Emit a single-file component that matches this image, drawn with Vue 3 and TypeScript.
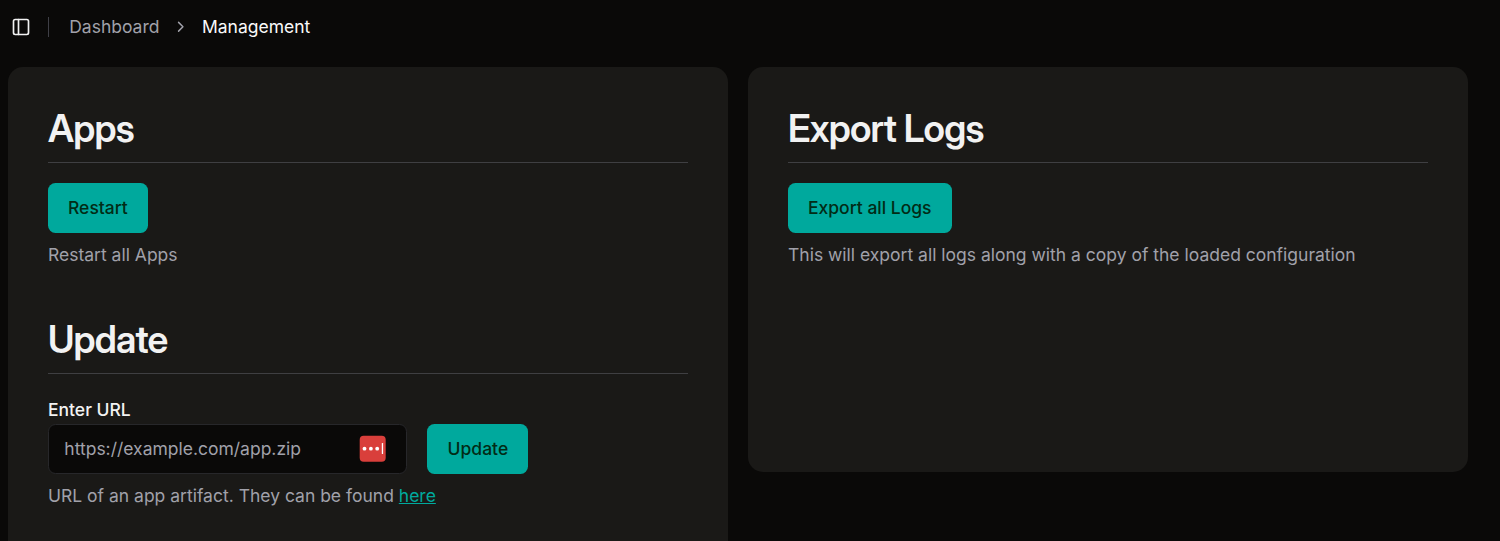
<script setup lang="ts">
import { ref } from 'vue'

const url = ref<string>('')
</script>

<template>
  <div class="page">
    <header class="topbar">
      <button class="toggle" type="button" aria-label="Toggle sidebar">
        <svg width="20" height="20" viewBox="0 0 24 24" fill="none" stroke="currentColor" stroke-width="2" stroke-linecap="round" stroke-linejoin="round">
          <rect x="3" y="3" width="18" height="18" rx="2" />
          <path d="M9 3v18" />
        </svg>
      </button>
      <span class="divider"></span>
      <nav class="crumbs">
        <span class="crumb">Dashboard</span>
        <svg width="17.5" height="17.5" viewBox="0 0 24 24" fill="none" stroke="currentColor" stroke-width="2" stroke-linecap="round" stroke-linejoin="round">
          <path d="m9 18 6-6-6-6" />
        </svg>
        <span class="crumb current">Management</span>
      </nav>
    </header>

    <main class="grid">
      <div class="card tall">
        <section>
          <h2>Apps</h2>
          <button class="btn" type="button">Restart</button>
          <p class="hint">Restart all Apps</p>
        </section>
        <section class="update">
          <h2>Update</h2>
          <label class="label" for="url">Enter URL</label>
          <div class="row">
            <div class="field">
              <input id="url" v-model="url" type="text" placeholder="https://example.com/app.zip" />
              <svg class="manager" width="27" height="27" viewBox="0 0 27 27">
                <rect x="0.7" y="0.7" width="26" height="26" rx="4" fill="#d93f3b" />
                <g fill="#fff">
                  <circle cx="5.5" cy="13.7" r="1.9" />
                  <circle cx="11.9" cy="13.7" r="1.9" />
                  <circle cx="18.2" cy="13.7" r="1.9" />
                  <rect x="22.8" y="8.1" width="1.3" height="11" rx="0.5" />
                </g>
              </svg>
            </div>
            <button class="btn" type="button">Update</button>
          </div>
          <p class="hint">URL of an app artifact. They can be found <a class="link">here</a></p>
        </section>
      </div>

      <div class="card short">
        <section>
          <h2>Export Logs</h2>
          <button class="btn" type="button">Export all Logs</button>
          <p class="hint">This will export all logs along with a copy of the loaded configuration</p>
        </section>
      </div>
    </main>
  </div>
</template>

<style>
body {
  margin: 0;
  background: #0a0908;
}
</style>

<style scoped>
.page {
  box-sizing: border-box;
  height: 541px;
  overflow: hidden;
  background: #0a0908;
  color: #f2f2f2;
  font-family: Inter, "Liberation Sans", sans-serif;
  font-size: 17.5px;
  line-height: 25px;
}
.topbar {
  display: flex;
  align-items: center;
  height: 54px;
  padding-left: 11px;
}
.toggle {
  display: flex;
  padding: 0;
  border: 0;
  background: none;
  color: #f2f2f2;
}
.divider {
  width: 1px;
  height: 20px;
  margin: 0 20.2px 0 17px;
  background: #3f3f46;
}
.crumbs {
  display: flex;
  align-items: center;
  gap: 12.5px;
  color: #a1a1aa;
}
.crumb {
  padding-bottom: 2px;
}
.current {
  color: #fafafa;
}
.grid {
  display: grid;
  grid-template-columns: 720px 720px;
  gap: 20px;
  align-items: start;
  padding: 13px 0 0 8px;
}
.card {
  box-sizing: border-box;
  padding: 40px;
  border-radius: 15px;
  background: #1a1917;
}
.tall {
  height: 520px;
}
.short {
  height: 405px;
}
h2 {
  margin: 0 0 20px;
  padding-bottom: 12px;
  border-bottom: 1px solid #3f3f42;
  font-family: "Inter Display", Inter, "Liberation Sans", sans-serif;
  font-size: 37.5px;
  font-weight: 600;
  line-height: 43px;
  letter-spacing: -0.78px;
}
.btn {
  display: block;
  height: 50px;
  padding: 0 20px 2px;
  border: 0;
  border-radius: 7.5px;
  background: #00a99d;
  color: #022c16;
  font: 500 17.5px/25px Inter, "Liberation Sans", sans-serif;
}
.row .btn {
  padding: 0 20px 2px 20.6px;
}
.hint {
  margin: 9px 0 0;
  padding-bottom: 1px;
  color: #a1a1aa;
}
.update {
  margin-top: 50px;
}
.label {
  display: block;
  margin-top: 23px;
  font-weight: 500;
}
.row {
  display: flex;
  gap: 20px;
  margin-top: 2px;
}
.field {
  display: flex;
  align-items: center;
  box-sizing: border-box;
  width: 359px;
  height: 50px;
  padding: 0 20px 2px 15.3px;
  border: 1px solid #27272a;
  border-radius: 7.5px;
  background: #0a0908;
}
.field input {
  flex: 1;
  min-width: 0;
  padding: 0;
  border: 0;
  outline: 0;
  background: none;
  color: #f2f2f2;
  font: 400 17.5px/25px Inter, "Liberation Sans", sans-serif;
}
.field input::placeholder {
  color: #a1a1aa;
  opacity: 1;
}
.manager {
  flex: none;
  margin-top: 1px;
}
.link {
  color: #00a99d;
  text-decoration: underline;
  text-decoration-thickness: 1px;
  text-underline-offset: 1px;
}
</style>
